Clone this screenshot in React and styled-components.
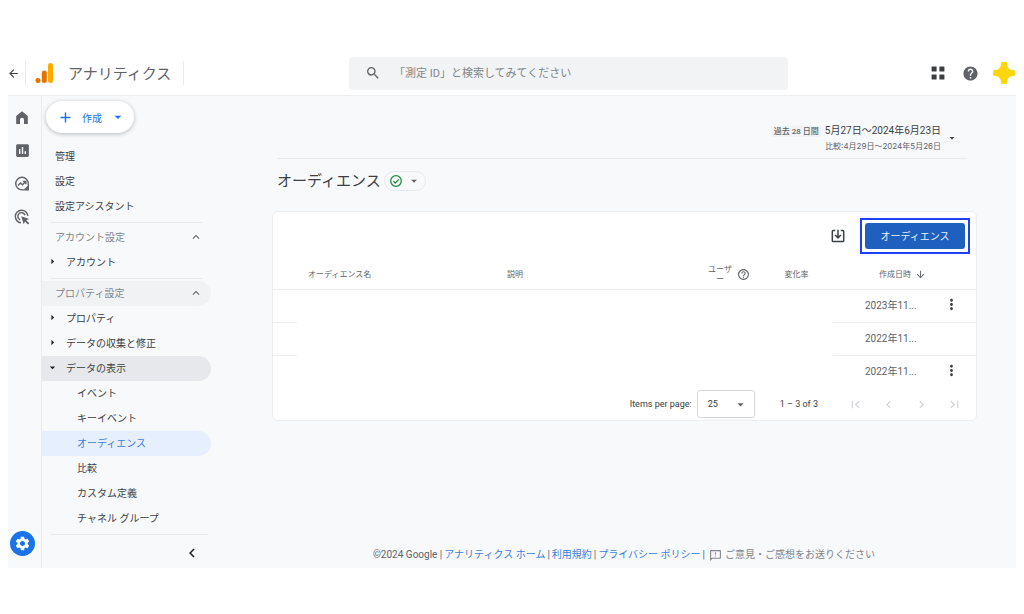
import React, { useState } from "react";
import styled, { createGlobalStyle } from "styled-components";
import {
  MdAdd,
  MdArrowBack,
  MdArrowDownward,
  MdArrowDropDown,
  MdArrowRight,
  MdChevronLeft,
  MdChevronRight,
  MdExpandLess,
  MdFirstPage,
  MdHelp,
  MdHelpOutline,
  MdInsertChart,
  MdLastPage,
  MdMoreVert,
  MdOutlineFeedback,
  MdSearch,
  MdSettings,
} from "react-icons/md";

const GlobalStyle = createGlobalStyle`
  * {
    box-sizing: border-box;
  }
  body {
    margin: 0;
    background: #fff;
    color: #3c4043;
    font-family: Roboto, "Noto Sans CJK JP", sans-serif;
    font-size: 10px;
  }
  button, input, select {
    font-family: inherit;
    font-size: inherit;
    color: inherit;
  }
  ul {
    list-style: none;
    margin: 0;
    padding: 0;
  }
  svg {
    display: block;
    flex: none;
  }
`;

const Page = styled.div`
  display: flex;
  flex-direction: column;
  min-height: 100vh;
  padding: 51px 8px 46px;
`;

/* header */

const Header = styled.header`
  display: grid;
  grid-template-columns: 341px 1fr 228px;
  align-items: center;
  height: 45px;
  border-bottom: 1px solid #eceef0;
`;

const Brand = styled.div`
  display: flex;
  align-items: center;
`;

const IconButton = styled.button`
  display: inline-flex;
  align-items: center;
  justify-content: center;
  width: ${(p) => p.$size || 33}px;
  height: ${(p) => p.$size || 33}px;
  padding: 0;
  border: 0;
  background: none;
  color: ${(p) => p.$color || "#5f6368"};
  cursor: pointer;
`;

const BackButton = styled(IconButton)`
  width: 17px;
  padding-right: 6px;
`;

const VerticalLine = styled.span`
  width: 1px;
  height: 24px;
  background: #e8eaed;
`;

const BrandName = styled.span`
  padding: 0 12px 2px 14px;
  color: #5f6368;
  font-size: 15px;
`;

const Logo = styled.svg`
  margin-left: 8px;
`;

const SearchBox = styled.label`
  display: flex;
  align-items: center;
  gap: 13px;
  height: 33px;
  padding: 0 16px;
  border-radius: 4px;
  background: #f1f3f4;
  color: #5f6368;
`;

const SearchInput = styled.input`
  flex: 1;
  min-width: 0;
  padding: 0;
  border: 0;
  outline: 0;
  background: none;
  font-size: 11px;
  &::placeholder {
    color: #80868b;
    opacity: 1;
  }
`;

const HeaderActions = styled.div`
  display: flex;
  justify-content: flex-end;
  margin-right: -4px;
`;

/* left side */

const Body = styled.div`
  display: flex;
  flex: 1;
  background: #f8f9fb;
`;

const Rail = styled.nav`
  display: flex;
  flex-direction: column;
  align-items: center;
  width: 34px;
  padding: 5px 6px 12px 0;
  border-right: 1px solid #e8eaed;
`;

const RailButton = styled(IconButton)`
  margin-left: 1px;
`;

const SettingsButton = styled.button`
  display: flex;
  align-items: center;
  justify-content: center;
  width: 25px;
  height: 25px;
  margin: auto 0 0 1px;
  padding: 0;
  border: 0;
  border-radius: 50%;
  background: #1a73e8;
  color: #fff;
  cursor: pointer;
`;

const Sidebar = styled.aside`
  display: flex;
  flex-direction: column;
  width: 169px;
  padding-top: 5px;
`;

const CreateButton = styled.button`
  display: flex;
  align-items: center;
  align-self: flex-start;
  gap: 8px;
  height: 32px;
  margin: 0 0 11px 4px;
  padding: 0 8px 0 11px;
  border: 0;
  border-radius: 16px;
  background: #fff;
  box-shadow: 0 1px 4px rgba(60, 64, 67, 0.35);
  color: #1a73e8;
  cursor: pointer;
`;

const NavRow = styled.button`
  display: flex;
  align-items: center;
  width: 100%;
  height: 25px;
  padding: 0 8px 2px ${(p) => p.$indent}px;
  border: 0;
  border-radius: 0 13px 13px 0;
  background: ${(p) => p.$bg || "none"};
  color: ${(p) => p.$color || "#3c4043"};
  text-align: left;
  white-space: nowrap;
  cursor: pointer;
`;

const NavLabel = styled.span`
  flex: 1;
`;

const ArrowSlot = styled.span`
  display: flex;
  width: 20px;
  color: #202124;
`;

const NavDivider = styled.hr`
  width: ${(p) => (p.$wide ? 158 : 152)}px;
  margin: 3px 0 2px 8px;
  border: 0;
  border-top: 1px solid #e8eaed;
`;

const CollapseBar = styled.div`
  display: flex;
  align-items: center;
  justify-content: flex-end;
  flex: 1;
  padding-right: 8px;
`;

/* content */

const Main = styled.main`
  display: flex;
  flex: 1;
  flex-direction: column;
  min-width: 0;
  padding: 27px 39px 5px 61px;
`;

const DateBar = styled.div`
  display: flex;
  align-items: center;
  justify-content: flex-end;
  gap: 3px;
  margin: 0 10px 0 5px;
  padding: 0 7px 5px 0;
  border-bottom: 1px solid #e8eaed;
`;

const DateText = styled.div`
  text-align: right;
`;

const DateRange = styled.div`
  display: flex;
  align-items: center;
  justify-content: flex-end;
  gap: 4px;
  line-height: 16px;
`;

const DateTag = styled.span`
  padding: 0 2px;
  background: #f1f3f4;
  color: #5f6368;
  font-size: 8px;
  font-weight: 500;
  line-height: 11px;
`;

const DateCompare = styled.div`
  color: #5f6368;
  font-family: Inter, "Noto Sans CJK JP", sans-serif;
  font-size: 8px;
  line-height: 14px;
`;

const TitleRow = styled.div`
  display: flex;
  align-items: center;
  gap: 3px;
  height: 43px;
  margin: 0 0 9px 5px;
`;

const Title = styled.h1`
  margin: 0;
  padding-bottom: 2px;
  color: #3c4043;
  font-size: 15px;
  font-weight: 400;
`;

const StatusChip = styled.button`
  display: flex;
  align-items: center;
  gap: 4px;
  height: 20px;
  padding: 0 4px;
  border: 1px solid #e8eaed;
  border-radius: 10px;
  background: none;
  color: #5f6368;
  cursor: pointer;
`;

const Card = styled.section`
  border: 1px solid #eceef0;
  border-radius: 6px;
  background: #fff;
`;

const Toolbar = styled.div`
  display: flex;
  align-items: center;
  justify-content: flex-end;
  gap: 6px;
  padding: 6px 6px 4px;
`;

const Highlight = styled.div`
  padding: 3px;
  border: 2px solid #1f3ff5;
`;

const PrimaryButton = styled.button`
  display: block;
  width: 100px;
  height: 26px;
  padding: 0 0 1px;
  border: 0;
  border-radius: 3px;
  background: #1f5fbe;
  color: #e8f0fe;
  cursor: pointer;
`;

const Table = styled.table`
  width: 100%;
  border-collapse: collapse;
  table-layout: fixed;
`;

const HeadCell = styled.th`
  height: 31px;
  padding: 3px 0 0 ${(p) => p.$pad || 0}px;
  border-bottom: 1px solid #eceef0;
  color: #5f6368;
  font-size: 8px;
  font-weight: 400;
  line-height: 10px;
  text-align: ${(p) => p.$align || "left"};
`;

const HeadContent = styled.span`
  display: flex;
  align-items: center;
  gap: 4px;
`;

const UserLabel = styled.span`
  width: 26px;
  text-align: center;
`;

const Cell = styled.td`
  height: 33px;
  padding: 0 0 2px ${(p) => p.$pad || 0}px;
  border-bottom: ${(p) => (p.$line ? "1px solid #eceef0" : "0")};
  color: #5f6368;
`;

const Paginator = styled.div`
  display: flex;
  align-items: center;
  justify-content: flex-end;
  height: 32px;
  padding-right: 5px;
  color: #3c4043;
  font-size: 9px;
`;

const PageSize = styled.label`
  display: flex;
  align-items: center;
  gap: 5px;
`;

const SelectWrap = styled.span`
  position: relative;
  display: block;
  svg {
    position: absolute;
    right: 7px;
    top: 7px;
    color: #5f6368;
    pointer-events: none;
  }
`;

const Select = styled.select`
  appearance: none;
  width: 58px;
  height: 28px;
  padding: 0 10px;
  border: 1px solid #d5d7da;
  border-radius: 3px;
  background: #fff;
`;

const RangeText = styled.span`
  padding: 0 21px 0 25px;
`;

const Footer = styled.footer`
  display: flex;
  align-items: center;
  gap: 2px;
  margin-top: auto;
  padding-left: 101px;
  color: #5f6368;
  line-height: 16px;
  white-space: nowrap;
  a {
    color: #3b7ee0;
    text-decoration: none;
  }
`;

const Feedback = styled.button`
  display: flex;
  align-items: center;
  gap: 3px;
  padding: 0 0 0 2px;
  border: 0;
  background: none;
  color: #80868b;
  line-height: 16px;
  cursor: pointer;
`;

/* icons that the icon set does not have */

const AnalyticsLogo = () => (
  <Logo width="20" height="22" viewBox="0 0 20 22" aria-hidden="true">
    <circle cx="4" cy="18.6" r="2.5" fill="#e37400" />
    <rect x="7.8" y="8.5" width="5" height="12.6" rx="2.5" fill="#e37400" />
    <rect x="14" y="1" width="5" height="20.1" rx="2.5" fill="#f9ab00" />
  </Logo>
);

const HomeIcon = () => (
  <svg width="16" height="16" viewBox="0 0 16 16" fill="currentColor">
    <path d="M8 1.2 2.2 5.9V14H6V9.8a2 2 0 0 1 4 0V14h3.8V5.9z" />
  </svg>
);

const ExploreIcon = () => (
  <svg width="16" height="16" viewBox="0 0 16 16" fill="none" stroke="currentColor">
    <path d="M14.3 7.6A6.3 6.3 0 1 0 8 13.9h6.3z" strokeWidth="1.4" strokeLinejoin="round" />
    <path d="M13.6 10.4 14.3 13.9 10.6 13.2z" fill="currentColor" />
    <path d="m4 9.4 2.5-2.5 1.9 1.9 3-3M8.9 5.4h2.9v2.9" strokeWidth="1.4" />
  </svg>
);

const AdsIcon = () => (
  <svg width="16" height="16" viewBox="0 0 16 16" fill="none" stroke="currentColor">
    <path d="M7 13.8A6.3 6.3 0 1 1 13.9 7" strokeWidth="1.4" />
    <path d="M6.2 10.8A3.7 3.7 0 1 1 11 6.2" strokeWidth="1.4" />
    <path
      d="m7.2 7.2 7.9 2.7-2.8 1.4 2.9 2.9-1.3 1.3-2.9-2.9-1.3 2.6z"
      fill="currentColor"
      stroke="none"
    />
  </svg>
);

const AppsIcon = () => (
  <svg width="14" height="14" viewBox="0 0 14 14" fill="currentColor">
    <path d="M.6.6h5v5h-5zM8.4.6h5v5h-5zM.6 8.4h5v5h-5zM8.4 8.4h5v5h-5z" />
  </svg>
);

const AvatarIcon = () => (
  <svg width="24" height="24" viewBox="0 0 24 24" fill="#ffd60a">
    <path d="M9 2.4Q9 1 10.4 1h3.2Q15 1 15 2.4c0 4 2.2 6.6 6.6 6.6q1.4 0 1.4 1.4v3.2q0 1.4-1.4 1.4c-4.4 0-6.6 2.6-6.6 6.600q0 1.4-1.4 1.4h-3.2Q9 23 9 21.6c0-4-2.200-6.600-6.600-6.600Q1 15 1 13.600v-3.200Q1 9 2.400 9C6.800 9 9 6.400 9 2.400z" />
  </svg>
);

const DownloadIcon = () => (
  <svg width="14" height="14" viewBox="0 0 14 14" fill="none" stroke="currentColor">
    <path
      d="M4.2 1.500h-2q-.9 0-.9.9v9.300q0 .9.9.9h9.600q.9 0 .9-.9V2.400q0-.9-.9-.9h-2"
      strokeWidth="1.5"
    />
    <path d="M7 .7v8M4.100 6 7 8.900 9.900 6" strokeWidth="1.5" />
  </svg>
);

const CheckIcon = () => (
  <svg width="14" height="14" viewBox="0 0 14 14" fill="none" stroke="#1e8e3e">
    <circle cx="7" cy="7" r="5.3" strokeWidth="1.3" />
    <path d="m4.4 7.2 1.9 1.8 3.500-3.600" strokeWidth="1.3" />
  </svg>
);

const topLinks = ["管理", "設定", "設定アシスタント"];

const displayLinks = [
  "イベント",
  "キーイベント",
  "オーディエンス",
  "比較",
  "カスタム定義",
  "チャネル グループ",
];

const rows = [
  { id: 1, created: "2023年11...", menu: true },
  { id: 2, created: "2022年11...", menu: false },
  { id: 3, created: "2022年11...", menu: true },
];

function SectionRow({ label, bg }) {
  return (
    <NavRow $indent={13} $color="#80868b" $bg={bg}>
      <NavLabel>{label}</NavLabel>
      <MdExpandLess size={14} color="#5f6368" />
    </NavRow>
  );
}

function GroupRow({ label, open }) {
  return (
    <NavRow $indent={4} $bg={open ? "#e6e8eb" : ""} aria-expanded={!!open}>
      <ArrowSlot>
        {open ? <MdArrowDropDown size={13} /> : <MdArrowRight size={13} />}
      </ArrowSlot>
      {label}
    </NavRow>
  );
}

function App() {
  const [active, setActive] = useState("オーディエンス");
  const [pageSize, setPageSize] = useState("25");

  return (
    <Page>
      <GlobalStyle />
      <Header>
        <Brand>
          <BackButton aria-label="戻る" $color="#3c4043">
            <MdArrowBack size={13} />
          </BackButton>
          <VerticalLine />
          <AnalyticsLogo />
          <BrandName>アナリティクス</BrandName>
          <VerticalLine />
        </Brand>
        <SearchBox>
          <MdSearch size={16} />
          <SearchInput
            aria-label="検索"
            placeholder="「測定 ID」と検索してみてください"
          />
        </SearchBox>
        <HeaderActions>
          <IconButton aria-label="アプリ" $color="#3c4043">
            <AppsIcon />
          </IconButton>
          <IconButton aria-label="ヘルプ">
            <MdHelp size={17} />
          </IconButton>
          <IconButton aria-label="アカウント">
            <AvatarIcon />
          </IconButton>
        </HeaderActions>
      </Header>

      <Body>
        <Rail>
          <RailButton aria-label="ホーム">
            <HomeIcon />
          </RailButton>
          <RailButton aria-label="レポート">
            <MdInsertChart size={17} />
          </RailButton>
          <RailButton aria-label="探索">
            <ExploreIcon />
          </RailButton>
          <RailButton aria-label="広告">
            <AdsIcon />
          </RailButton>
          <SettingsButton aria-label="管理">
            <MdSettings size={17} />
          </SettingsButton>
        </Rail>

        <Sidebar>
          <CreateButton>
            <MdAdd size={17} />
            作成
            <MdArrowDropDown size={16} />
          </CreateButton>
          <ul>
            {topLinks.map((label) => (
              <li key={label}>
                <NavRow $indent={13}>{label}</NavRow>
              </li>
            ))}
          </ul>
          <NavDivider />
          <SectionRow label="アカウント設定" />
          <GroupRow label="アカウント" />
          <NavDivider />
          <SectionRow label="プロパティ設定" bg="#f1f2f4" />
          <GroupRow label="プロパティ" />
          <GroupRow label="データの収集と修正" />
          <GroupRow label="データの表示" open />
          <ul>
            {displayLinks.map((label) => (
              <li key={label}>
                <NavRow
                  $indent={35}
                  $bg={active === label ? "#e6effd" : ""}
                  $color={active === label ? "#3b7ee0" : ""}
                  onClick={() => setActive(label)}
                >
                  {label}
                </NavRow>
              </li>
            ))}
          </ul>
          <NavDivider $wide />
          <CollapseBar>
            <IconButton $size={22} $color="#202124" aria-label="閉じる">
              <MdChevronLeft size={18} />
            </IconButton>
          </CollapseBar>
        </Sidebar>

        <Main>
          <DateBar>
            <DateText>
              <DateRange>
                <DateTag>過去 28 日間</DateTag>
                5月27日～2024年6月23日
              </DateRange>
              <DateCompare>比較:4月29日～2024年5月26日</DateCompare>
            </DateText>
            <IconButton $size={16} $color="#3c4043" aria-label="期間">
              <MdArrowDropDown size={12} />
            </IconButton>
          </DateBar>

          <TitleRow>
            <Title>オーディエンス</Title>
            <StatusChip aria-label="ステータス">
              <CheckIcon />
              <MdArrowDropDown size={14} />
            </StatusChip>
          </TitleRow>

          <Card>
            <Toolbar>
              <IconButton aria-label="ダウンロード" $color="#3c4043">
                <DownloadIcon />
              </IconButton>
              <Highlight>
                <PrimaryButton>オーディエンス</PrimaryButton>
              </Highlight>
            </Toolbar>
            <Table>
              <colgroup>
                <col width="24" />
                <col />
                <col />
                <col width="63" />
                <col width="73" />
                <col width="95" />
                <col width="48" />
              </colgroup>
              <thead>
                <tr>
                  <HeadCell />
                  <HeadCell $pad={11}>オーディエンス名</HeadCell>
                  <HeadCell $pad={10}>説明</HeadCell>
                  <HeadCell $pad={10}>
                    <HeadContent>
                      <UserLabel>ユーザー</UserLabel>
                      <MdHelpOutline size={13} />
                    </HeadContent>
                  </HeadCell>
                  <HeadCell $align="center">変化率</HeadCell>
                  <HeadCell $pad={46}>
                    <HeadContent>
                      作成日時
                      <MdArrowDownward size={11} />
                    </HeadContent>
                  </HeadCell>
                  <HeadCell />
                </tr>
              </thead>
              <tbody>
                {rows.map((row, i) => {
                  const line = i < rows.length - 1;
                  return (
                    <tr key={row.id}>
                      <Cell $line={line} />
                      <Cell colSpan={4} />
                      <Cell $line={line} $pad={32}>
                        {row.created}
                      </Cell>
                      <Cell $line={line} $pad={12}>
                        {row.menu && (
                          <IconButton $size={22} $color="#3c4043" aria-label="メニュー">
                            <MdMoreVert size={17} />
                          </IconButton>
                        )}
                      </Cell>
                    </tr>
                  );
                })}
              </tbody>
            </Table>
            <Paginator>
              <PageSize>
                Items per page:
                <SelectWrap>
                  <Select
                    value={pageSize}
                    onChange={(e) => setPageSize(e.target.value)}
                  >
                    <option>25</option>
                    <option>50</option>
                    <option>100</option>
                  </Select>
                  <MdArrowDropDown size={15} />
                </SelectWrap>
              </PageSize>
              <RangeText>1 – 3 of 3</RangeText>
              <IconButton $color="#d2d4d7" aria-label="最初">
                <MdFirstPage size={15} />
              </IconButton>
              <IconButton $color="#d2d4d7" aria-label="前へ">
                <MdChevronLeft size={15} />
              </IconButton>
              <IconButton $color="#d2d4d7" aria-label="次へ">
                <MdChevronRight size={15} />
              </IconButton>
              <IconButton $color="#d2d4d7" aria-label="最後">
                <MdLastPage size={15} />
              </IconButton>
            </Paginator>
          </Card>

          <Footer>
            <span>©2024 Google |</span>
            <a href="#home">アナリティクス ホーム</a>
            <span>|</span>
            <a href="#terms">利用規約</a>
            <span>|</span>
            <a href="#privacy">プライバシー ポリシー</a>
            <span>|</span>
            <Feedback>
              <MdOutlineFeedback size={13} />
              ご意見・ご感想をお送りください
            </Feedback>
          </Footer>
        </Main>
      </Body>
    </Page>
  );
}

export default App;
